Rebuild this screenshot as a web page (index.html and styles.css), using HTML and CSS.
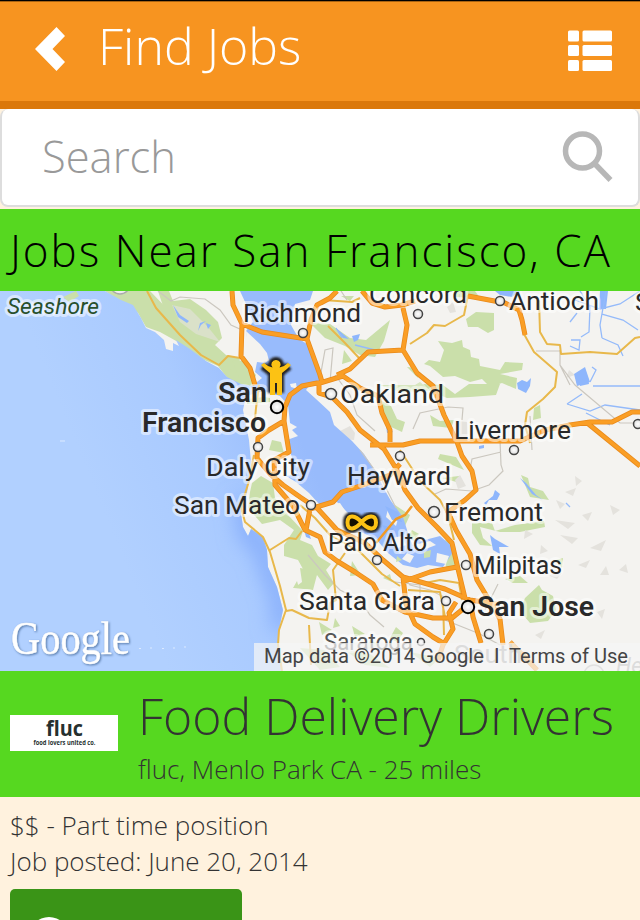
FILE: index.html
```html
<!DOCTYPE html>
<html lang="en">
<head>
<meta charset="utf-8">
<title>Find Jobs</title>
<link rel="stylesheet" href="styles.css">
</head>
<body>
<header class="topbar">
  <svg class="back" viewBox="0 0 30 44"><path d="M21.5 0 30 9 17.500 22 30 35 21.500 44 0 22Z"/></svg>
  <h1 class="topbar-title">Find Jobs</h1>
  <svg class="list-icon" viewBox="0 0 44 41">
    <rect y="0.500" width="11" height="11" rx="1.500"/><rect x="14.500" y="0.500" width="29.500" height="11" rx="1.500"/>
    <rect y="15" width="11" height="11" rx="1.500"/><rect x="14.500" y="15" width="29.500" height="11" rx="1.500"/>
    <rect y="30" width="11" height="11" rx="1.500"/><rect x="14.500" y="30" width="29.500" height="11" rx="1.500"/>
  </svg>
</header>
<div class="search">
  <span class="search-label">Search</span>
  <svg class="search-icon" viewBox="0 0 52 54"><circle cx="20.500" cy="21" r="17"/><path d="M32.500 33.500 48.500 50"/></svg>
</div>
<h2 class="banner">Jobs Near San Francisco, CA</h2>

<svg class="map" viewBox="0 291 640 380">
  <defs>
    <linearGradient id="sea" gradientUnits="userSpaceOnUse" x1="90" y1="480" x2="285" y2="400">
      <stop offset="0" stop-color="#b1d0ff"/><stop offset=".55" stop-color="#a9caff"/><stop offset="1" stop-color="#98bbfc"/>
    </linearGradient>
    <radialGradient id="dot"><stop offset="0" stop-color="#fff"/><stop offset="1" stop-color="#ddd"/></radialGradient>
    <filter id="glow" x="-30%" y="-30%" width="160%" height="160%"><feGaussianBlur stdDeviation="1.100"/></filter>
    <filter id="soft" filterUnits="userSpaceOnUse" x="150" y="291" width="250" height="400"><feGaussianBlur stdDeviation="10"/></filter>
    <path id="water" d="M0 291H105L121 300 133 305 141 318 146 328 155 332 164 340 166 349 173 351 173 343 179 346 176 340 190 349 206 361 219 368 227 377 241 384 252 386 262 378 255 372 257 362 265 363 269 360 262 351 248 344 246 331 253 322 246 304 240 291H313L310 300 295 304 291 325 299 339 307 344 314 362 321 380 315 386 309 386 306 390 316 399 330 412 334 425 352 441 364 454 376 472 383 487 391 501 403 517 408 533 421 541 440 536 455 549 443 567 428 565 417 568 403 565 388 553 376 539 357 530 344 524 348 513 337 502 320 505 309 493 296 482 286 476 298 474 288 462 292 458 287 440 298 436 292 430 297 427 290 423 288 405 280 396 264 391 246 396 243 410 249 440 251 462 247 493 241 513 243 527 248 536 251 529 263 537 267 550 268 567 277 587 283 610 279 630 278 648 282 671H0Z"/>
    <clipPath id="water-clip"><use href="#water"/></clipPath>
  </defs>
  <rect class="land" y="291" width="640" height="380"/>

  <g class="park">
    <path d="M105 291H150L176 318 210 348 228 360 240 372 252 386 232 384 218 366 200 358 178 342 160 332 146 327 138 313Z"/>
    <path d="M158 291H169L173 301 190 299 206 310 218 322 222 338 215 345 226 355 240 358 238 375 215 358 190 340 165 312Z"/>
    <path d="M232 360 244 361 256 375 252 386 240 380Z"/>
    <path d="M310 323 330 324 350 338 366 340 390 320 384 341 375 357 360 355 345 346 325 338Z"/>
    <path d="M466 319 476 312 494 313 494 330 488 333 478 327 468 327Z"/>
    <path d="M438 341 452 343 462 340 463 347 470 350 471 357 479 359 480 366 500 370 505 362 523 363 522 370 500 374 517 378 516 389 502 383 490 387 482 379 470 382 455 376 443 377 430 366 424 364 429 360 440 362 444 350Z"/>
    <path d="M423 384 443 385 455 394 469 384H500L496 395 470 397 447 398 430 391Z"/>
    <path d="M407 367 417 368 418 378Z"/>
    <path d="M272 440 281 442 284 453 269 450Z"/><path d="M247 399 264 397 270 398V402L247 404Z"/>
    <path d="M252 483 261 476 273 483 275 498 289 516 303 531 300 540 312 545 318 556 331 564 326 570 334 583 328 590 317 575 308 578 298 560 284 556 284 545 294 530 280 520 262 524 248 508 250 492Z"/>
    <path d="M300 568 318 571 313 590 294 588 302 582ZM297 581 299 588H293Z"/>
    <path d="M380 400 391 406 397 419 405 422 402 432 389 426 381 415ZM430 415 440 421 454 420 451 428 433 426ZM440 454 456 457 464 470 438 459ZM442 478 459 476 460 483Z"/>
    <path d="M521 475 528 478 530 487 543 491 549 500 530 497Z"/>
    <path d="M472 523 492 523 495 531 515 525 544 521 545 527 520 532 500 532 480 527 483 538 492 546 480 545 472 533Z"/>
    <path d="M525 598 539 585 542 590 553 596 556 610 548 621 530 623 520 611Z"/>
    <path d="M505 579 520 576 528 583 513 583ZM556 560 563 558 562 568Z"/>
    <path d="M395 505 410 515 404 528 390 524ZM395 535 410 540 415 547 401 552ZM445 540 455 545 457 568 446 570Z"/>
    <path d="M352 561 361 575 350 576ZM383 578 390 574 392 582ZM319 622 332 630 322 635ZM352 626 365 634 355 637ZM396 627 403 633 397 642 390 638ZM335 618 340 626 333 628ZM370 640 380 645 366 650Z"/>
    <path d="M300 648 325 650 340 667 320 670ZM345 650 370 654 390 668 365 665ZM410 652 440 658 430 667Z"/>
    <path d="M534 408 540 405 541 418 533 420ZM344 350 352 361 342 364ZM455 291H475L480 298 455 297ZM341 296H354L350 301Z"/>
    <path d="M380 385H415L420 382 430 391 400 392Z" opacity=".7"/>
  </g>
  <g class="hill">
    <path d="M172 305 190 309 208 327 220 342 196 334 180 322Z" opacity=".6"/>
    <path d="M453 302 456 312 450 313 447 307ZM541 545 548 551 540 554ZM556 500 565 504 560 509ZM575 476 582 481 576 486ZM555 520 575 523 568 529ZM560 535 578 538 572 544ZM590 548 606 540 601 551ZM578 565 590 560 586 568ZM548 575 562 573 557 579ZM610 505 620 510 613 515ZM582 515 592 512 588 521ZM565 492 576 488 573 496ZM566 378 569 370 575 375ZM600 575 606 566 609 575ZM525 530 533 534 524 539ZM619 570 626 564 628 573ZM535 635 545 630 541 639ZM597 612 605 609 602 619Z"/>
    <path d="M457 421 467 422 468 441 458 443ZM455 480 460 475 466 486 458 489ZM338 432 350 426 355 433 354 440 343 439Z"/>
  </g>

  <use href="#water" class="sea"/>
  <g clip-path="url(#water-clip)">
    <path class="shallows" filter="url(#soft)" d="M243 500 248 536 263 545 268 567 277 587 283 610 279 630"/>
  </g>
  <path class="land" d="M246 331 260 344 267 353 269 361 258 353 247 347ZM290 384 296 383 297 389 291 387ZM324 505 340 503 346 512 338 516 329 511ZM409 538 418 544 430 541 436 545 423 550 414 547ZM392 538 402 536 406 545 398 548 392 544ZM407 553 414 556 410 563 402 559ZM437 553 449 556 446 564 436 562ZM388 509 394 513 391 517 398 519 396 526 386 517Z"/>
  <path class="park" d="M63 297 76 291 79 296 69 302ZM412 530 419 534 414 540 408 537ZM424 552 431 550 430 557 424 558ZM397 556 402 560 396 562Z"/>
  <g class="lake">
    <path d="M173 305 180 315 189 321 187 323 178 317ZM198 331 200 323 206 321 201 325ZM206 323 211 325 208 329Z"/>
    <path d="M336 328 349 339 343 338ZM352 336 360 334 358 340 354 342ZM517 383 522 380 527 382 531 378 530 386 526 393 518 389ZM574 374 585 367 590 382 577 386Z"/>
    <path d="M386 425 393 432 387 433ZM479 446 484 445V448L479 449ZM484 503 493 496 495 490 500 494 497 500 489 500 486 505ZM520 478 526 483 536 495 543 500 532 494ZM490 535 495 539 509 547 499 547 500 554 493 550ZM304 530 308 531 311 539 306 537Z"/>
    <path d="M385 506 398 512 402 522 392 520ZM382 525 394 528 389 537ZM600 291H608L606 309H599Z"/>
    <path d="M495 291H520L512 297 500 295ZM580 380 588 378 589 384 580 386Z"/>
    <path class="creek" d="M580 291 590 307 589 332 581 337M606 291 600 325 602 338M575 300 600 309 620 304 640 291M602 314 623 320 638 330M570 322 577 313M590 382 596 370 592 367M593 386H640M602 338 618 345 623 356M567 404 590 411 605 405 640 410M610 425 586 413M571 340H580L579 350 570 346M342 338 336 328M355 345 375 350M567 404 582 394M566 503 570 507"/>
  </g>

  <g class="minor">
    <path d="M158 291 171 301 180 297 205 299 220 310 231 325 242 330M413 429 420 413 448 407 463 408 462 420M500 440 501 465 503 471 489 485 472 491 446 489 435 494M501 452 472 459 470 470M570 385 560 365V350M560 365 575 385 620 423H638M530 416 532 450M320 378 325 350 333 348 330 382M335 375 350 395 357 415 375 431M360 450 382 480 396 508M308 555 325 575 340 590 360 600 370 615 384 627M400 572 410 585 430 590 450 600M445 620 480 634 500 645M395 582 420 585 420 602M485 610 498 584M536 351H560M341 291 347 300"/>
  </g>
  <g class="secondary">
    <path d="M147 291 156 308 180 335 201 355 219 365 228 356 240 358M259 385 256 408 254 430M254 455 249 481 241 507 245 522 263 537 270 552 280 586 286 610 279 630 278 645 282 671M270 550 289 538 296 539 302 531M286 611 292 610 309 618 327 620 330 603 336 600 333 570 345 553M309 625 311 665"/>
    <path d="M323 300 352 302 360 298M328 326 345 343 359 358M410 344 427 333 434 325 445 326 464 315 468 295M524 334 534 352 557 372 555 387 543 399 527 412 525 425 530 443M539 300 540 332 547 344 560 345 561 354 590 352 617 354 635 338 640 337M400 450 420 481 440 500 448 515 454 540M300 505 315 518 330 535 360 552 382 574 400 586M408 590 440 592 445 617M425 583 440 580 459 583 462 600M443 600 444 635"/>
  </g>
  <g class="road-edge">
    <path id="roads" d="M232 291 233 305 242 324 241 356 250 368 255 385M242 324 262 332 307 339 320 375 322 382 302 386 290 395 285 407 284 421 269 430 258 438 257 458 270 474 283 485 300 497 318 509 337 530 365 543 383 560 403 577 445 589 470 600 496 604M307 339 311 320 317 305 330 298 337 291M320 383 343 376 360 388 378 396 382 413 390 430 390 442M319 384V393L332 397 347 412 360 430 384 449 397 470 405 490 418 508 437 527 452 543 459 573 465 598M337 375 350 369 368 352 403 350 407 325 403 308M362 291 372 303 385 307 402 305 415 301M403 350 417 373 433 386 444 415 457 442 462 456 472 471 476 490 465 500 448 512 456 530 470 554 477 580 492 605 500 619 503 645M370 445H403L420 441H520L545 430 570 425 590 422H612L632 412H640M586 422 640 466M468 296 505 303 519 310 522 320 525 335M284 421 289 452 274 460 275 485 293 506 305 530 320 537 325 552 337 561 355 572 373 584 382 600 405 612 433 618 452 618 463 609M310 509 333 502 342 492 360 486 390 475 400 464M310 509 306 530M403 577 406 604 415 624 433 637 443 643M402 582 430 572 457 567M470 600 473 617 481 643M456 602 449 613 453 629 443 645 438 660M510 642 537 670"/>
  </g>
  <use href="#roads" class="road"/>
  <path class="bridge" d="M376 543 396 519 405 515 412 506"/>

  <g class="markers">
    <circle cx="303" cy="333" r="4.500"/><circle cx="418" cy="314" r="4.500"/><circle cx="500" cy="301" r="4.500"/>
    <circle cx="331" cy="394" r="5.500"/><circle cx="258" cy="447" r="4.500"/><circle cx="400" cy="456" r="4.500"/>
    <circle cx="514" cy="450" r="4.500"/><circle cx="311" cy="505" r="4.500"/><circle cx="434" cy="512" r="5.500"/>
    <circle cx="377" cy="560" r="4.500"/><circle cx="466" cy="565" r="4.500"/><circle cx="446" cy="601" r="4.500"/>
    <circle cx="489" cy="634" r="4.500"/><circle cx="421" cy="642" r="3.500"/><circle cx="638" cy="424" r="4.500"/>
    <circle class="major" cx="277" cy="407" r="6.200"/><circle class="major" cx="468" cy="607" r="6.200"/>
    <circle class="faint" cx="120" cy="284" r="10"/><circle class="faint" cx="594" cy="675" r="10"/>
  </g>
  <g class="labels">
    <text class="nature" x="7" y="314" textLength="92" lengthAdjust="spacingAndGlyphs">Seashore</text>
    <text x="243" y="322" textLength="118" lengthAdjust="spacingAndGlyphs">Richmond</text>
    <text x="369" y="303" textLength="98" lengthAdjust="spacingAndGlyphs">Concord</text>
    <text x="509" y="310" textLength="90" lengthAdjust="spacingAndGlyphs">Antioch</text>
    <text x="635" y="311">S</text>
    <text class="city" x="218" y="402" textLength="49" lengthAdjust="spacingAndGlyphs">San</text>
    <text class="city" x="142" y="432" textLength="124" lengthAdjust="spacingAndGlyphs">Francisco</text>
    <text x="340" y="403" textLength="104" lengthAdjust="spacingAndGlyphs">Oakland</text>
    <text x="454" y="439" textLength="117" lengthAdjust="spacingAndGlyphs">Livermore</text>
    <text x="206" y="476" textLength="104" lengthAdjust="spacingAndGlyphs">Daly City</text>
    <text x="347" y="485" textLength="104" lengthAdjust="spacingAndGlyphs">Hayward</text>
    <text x="174" y="514" textLength="126" lengthAdjust="spacingAndGlyphs">San Mateo</text>
    <text x="444" y="521" textLength="99" lengthAdjust="spacingAndGlyphs">Fremont</text>
    <text x="328" y="551" textLength="99" lengthAdjust="spacingAndGlyphs">Palo Alto</text>
    <text x="474" y="574" textLength="88" lengthAdjust="spacingAndGlyphs">Milpitas</text>
    <text x="299" y="610" textLength="136" lengthAdjust="spacingAndGlyphs">Santa Clara</text>
    <text class="city" x="477" y="616" textLength="117" lengthAdjust="spacingAndGlyphs">San Jose</text>
    <text class="small" x="324" y="650" textLength="89" lengthAdjust="spacingAndGlyphs">Saratoga</text>
    <text class="fade" x="454" y="663" textLength="68" lengthAdjust="spacingAndGlyphs">South</text>
    <text class="nature fade" x="616" y="673">He</text>
  </g>

  <g transform="translate(0 2)">
    <g class="pin-shadow" filter="url(#glow)">
      <circle cx="276" cy="363" r="4"/>
      <path d="M263 364 272 371V391M289 364 280 371V391M276 371V391"/>
    </g>
    <path class="pin" d="M276 358a4.500 4.500 0 0 1 3.500 7.500q5-1 8.500-4.500l3 2-4 4-5 4v22h-5v-12h-2v12h-5v-22l-5-4-4-4 3-2q3.500 3.500 8.500 4.500a4.500 4.500 0 0 1 3.500-7.500Z"/>
  </g>
  <path class="pin-shadow loop-shadow" filter="url(#glow)" d="M361.500 522C356 516 347.500 513 347.500 522.500S356 529 361.500 522C367 516 376 513 376 522.500S367 529 361.500 522Z"/>
  <path class="loop" d="M361.500 522C356 516 347.500 513 347.500 522.500S356 529 361.500 522C367 516 376 513 376 522.500S367 529 361.500 522Z"/>

  <path class="specks" d="M139 648.500h2M150 648h2M162 648.500h2M173 648h2M184 647h2M60 441h5"/>
  <text class="google" x="11" y="654" textLength="119" lengthAdjust="spacingAndGlyphs">Google</text>
  <rect class="credit-bg" x="254" y="643" width="386" height="28"/>
  <g class="credit">
    <text x="264" y="663" textLength="220" lengthAdjust="spacingAndGlyphs">Map data ©2014 Google</text>
    <text x="494" y="663">I</text>
    <text x="509" y="663" textLength="119" lengthAdjust="spacingAndGlyphs">Terms of Use</text>
  </g>
</svg>

<section class="job">
  <svg class="logo" viewBox="0 0 108 36">
    <text class="logo-name" x="36" y="21" textLength="37" lengthAdjust="spacingAndGlyphs">fluc</text>
    <text class="logo-tag" x="23.500" y="30" textLength="62" lengthAdjust="spacingAndGlyphs">food lovers united co.</text>
  </svg>
  <div class="job-text">
    <h3 class="job-title">Food Delivery Drivers</h3>
    <p class="job-place">fluc, Menlo Park CA - 25 miles</p>
  </div>
</section>
<section class="details">
  <p>$$ - Part time position</p>
  <p>Job posted: June 20, 2014</p>
  <div class="apply"><svg class="apply-icon" viewBox="0 0 40 40"><circle cx="20" cy="20" r="20"/></svg></div>
</section>
</body>
</html>
```
FILE: styles.css
```css
* { box-sizing: border-box; }
body { margin: 0; width: 640px; background: #fff2de; color: #333; font-family: "Open Sans", sans-serif; font-weight: 300; }
h1, h2, h3, p { margin: 0; font-weight: 300; white-space: nowrap; }
svg { display: block; flex: none; }

.topbar { display: flex; align-items: flex-start; height: 109px; padding: 7px 28px 0 35px; background: #f79420; border-top: 1px solid #000; border-bottom: 8px solid #db780a; box-shadow: inset 0 1px #a86312; color: #fff; }
.back { width: 30px; height: 44px; margin-top: 19px; fill: #fff; }
.topbar-title { flex: 1; margin: 1px 0 0 33px; font-size: 50px; line-height: 75px; }
.list-icon { width: 44px; height: 41px; margin-top: 22px; fill: #fff; }

.search { display: flex; align-items: center; justify-content: space-between; height: 98px; padding: 0 24px 0 40px; background: #fff; border: 2px solid #ddd; border-top: 0; border-radius: 8px; color: #999; font-size: 43.500px; }
.search-label { line-height: 60px; }
.search-icon { width: 52px; height: 54px; fill: none; stroke: #b7b7b7; stroke-width: 5.500; }

.banner { height: 82px; margin-top: 2px; padding-left: 10px; background: #56d820; color: #000; font-size: 44px; line-height: 83px; letter-spacing: 1.980px; }

.map { width: 640px; height: 380px; font-family: Roboto, sans-serif; font-weight: 400; }
.land { fill: #f4f3f0; }
.park { fill: #cadfaa; }
.hill { fill: #e4e2dd; }
.sea { fill: url(#sea); }
.shallows { fill: none; stroke: #86adfb; stroke-width: 18; }
.lake { fill: #8eb6fc; }
.creek { fill: none; stroke: #94bafa; stroke-width: 1.300; }
.minor { fill: none; stroke: #cbc7bf; stroke-width: 1.200; }
.secondary { fill: none; stroke: #e8b84b; stroke-width: 2; stroke-linejoin: round; }
.road-edge { fill: none; stroke: #e98a1b; stroke-width: 5; stroke-linejoin: round; }
.road { fill: none; stroke: #fa9e25; stroke-width: 3.500; stroke-linejoin: round; }
.bridge { fill: none; stroke: #f29a22; stroke-width: 2.500; }
.markers circle { fill: url(#dot); stroke: #444; stroke-width: 1.500; }
.markers .major { stroke: #000; stroke-width: 2; }
.markers .faint { fill: #eee; stroke: #aaa; }
.labels text { font-size: 26.500px; fill: #292929; stroke: #fff; stroke-opacity: .5; stroke-width: 6px; stroke-linejoin: round; paint-order: stroke; }
.labels .city { font-weight: 600; font-size: 27px; }
.labels .small { font-size: 23px; fill: #555; }
.labels .nature { font-size: 22px; font-style: italic; fill: #28502c; }
.labels .fade { fill: #999; stroke-opacity: .2; }
.pin-shadow { fill: #222; stroke: #222; stroke-width: 8; stroke-linejoin: round; }
.pin-shadow path { fill: none; }
.loop-shadow { fill: none; stroke-width: 9; }
.pin { fill: #fcc214; }
.loop { fill: #151000; stroke: #fcc214; stroke-width: 4; }
.specks { stroke: #dceaff; stroke-width: 1; }
.google { font-family: "Liberation Serif", serif; font-size: 46px; fill: #fff; stroke: #fff; stroke-width: .500px; filter: drop-shadow(1px 1px 1px #5578a8); }
.credit-bg { fill: #f5f5f5; fill-opacity: .72; }
.credit text { font-size: 20.500px; fill: #444; }

.job { display: flex; height: 126px; padding: 10px 0 0 10px; background: #56d820; }
.logo { width: 108px; height: 36px; margin: 34px 20px 0 0; background: #fff; }
.logo-name { font: 700 21px "Open Sans", sans-serif; fill: #26302f; }
.logo-tag { font: 700 7px "Open Sans", sans-serif; fill: #26302f; }
.job-title { font-size: 49.900px; line-height: 71px; height: 70px; }
.job-place { font-size: 26px; line-height: 36px; }

.details { padding: 10px 10px 0; font-size: 26px; line-height: 36px; }
.apply { width: 232px; height: 31px; margin-top: 10px; padding: 28px 0 0 19px; overflow: hidden; background: #3a9417; border-radius: 5px 5px 0 0; }
.apply-icon { width: 40px; height: 40px; fill: #fff; }
```
